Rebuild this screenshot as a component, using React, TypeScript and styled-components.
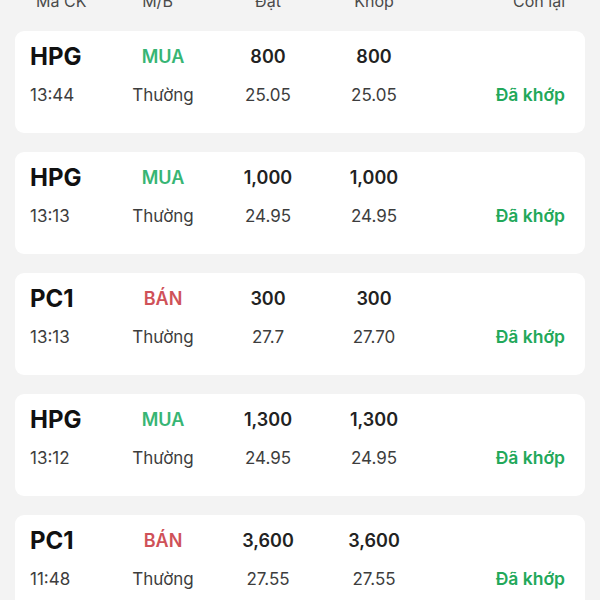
import React from "react";
import styled, { createGlobalStyle } from "styled-components";

const Global = createGlobalStyle`
  html, body { margin: 0; padding: 0; background: #f3f3f3; overflow: hidden; }
  body { font-family: Inter, "Open Sans", "Liberation Sans", sans-serif; }
`;

const Page = styled.div`
  padding: 0 15px;
  display: flex;
  flex-direction: column;
  gap: 19px;
`;

const Header = styled.div`
  margin-top: -10px;
  height: 22px;
  display: grid;
  grid-template-columns: 74px 95px 126px 86px 1fr;
  padding: 0 20px 0 21px;
  align-items: center;
  font-size: 16px;
  color: #4a4a4a;
`;

const HeadCell = styled.div<{ $align: "left" | "center" | "right" }>`
  text-align: ${(p) => p.$align};
  line-height: 22px;
`;

const Card = styled.div`
  background: #ffffff;
  border-radius: 9px;
  height: 102px;
  box-sizing: border-box;
  padding: 12px 20px 0 15px;
  display: grid;
  grid-template-columns: 80px 106px 104px 108px 1fr;
  grid-template-rows: 28px 24px;
  row-gap: 12px;
  align-items: center;
`;

const Symbol = styled.div`
  font-size: 24px;
  font-weight: 700;
  color: #111;
  line-height: 28px;
`;

const Side = styled.div<{ $sell: boolean }>`
  text-align: center;
  font-size: 18px;
  font-weight: 600;
  color: ${(p) => (p.$sell ? "#cf5158" : "#37b574")};
  line-height: 28px;
`;

const Qty = styled.div`
  text-align: center;
  font-size: 18px;
  font-weight: 600;
  color: #222;
  line-height: 28px;
`;

const Sub = styled.div<{ $align: "left" | "center" | "right" }>`
  text-align: ${(p) => p.$align};
  font-size: 17px;
  color: #3d3d3d;
  line-height: 24px;
`;

const Status = styled.div`
  text-align: right;
  font-size: 17.5px;
  font-weight: 600;
  color: #22a85a;
  line-height: 24px;
`;

type Order = {
  sym: string;
  sell: boolean;
  qty: string;
  matched: string;
  time: string;
  price: string;
  mprice: string;
};

const orders: Order[] = [
  { sym: "HPG", sell: false, qty: "800", matched: "800", time: "13:44", price: "25.05", mprice: "25.05" },
  { sym: "HPG", sell: false, qty: "1,000", matched: "1,000", time: "13:13", price: "24.95", mprice: "24.95" },
  { sym: "PC1", sell: true, qty: "300", matched: "300", time: "13:13", price: "27.7", mprice: "27.70" },
  { sym: "HPG", sell: false, qty: "1,300", matched: "1,300", time: "13:12", price: "24.95", mprice: "24.95" },
  { sym: "PC1", sell: true, qty: "3,600", matched: "3,600", time: "11:48", price: "27.55", mprice: "27.55" },
];

export default function App() {
  return (
    <>
      <Global />
      <Page>
        <Header>
          <HeadCell $align="left">Mã CK</HeadCell>
          <HeadCell $align="center">M/B</HeadCell>
          <HeadCell $align="center">Đặt</HeadCell>
          <HeadCell $align="center">Khớp</HeadCell>
          <HeadCell $align="right">Còn lại</HeadCell>
        </Header>
        {orders.map((o, i) => (
          <Card key={i}>
            <Symbol>{o.sym}</Symbol>
            <Side $sell={o.sell}>{o.sell ? "BÁN" : "MUA"}</Side>
            <Qty>{o.qty}</Qty>
            <Qty>{o.matched}</Qty>
            <div />
            <Sub $align="left">{o.time}</Sub>
            <Sub $align="center">Thường</Sub>
            <Sub $align="center">{o.price}</Sub>
            <Sub $align="center">{o.mprice}</Sub>
            <Status>Đã khớp</Status>
          </Card>
        ))}
      </Page>
    </>
  );
}
